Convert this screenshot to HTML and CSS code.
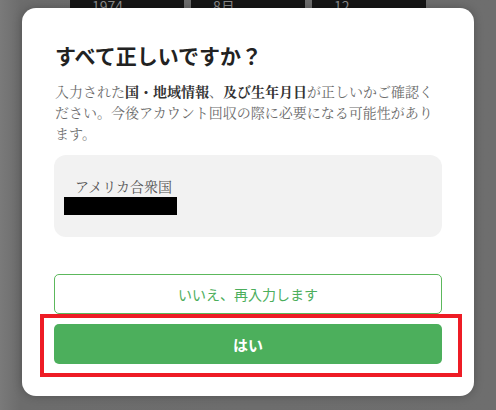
FILE: index.html
```html
<!DOCTYPE html>
<html lang="ja">
<head>
<meta charset="utf-8">
<title>確認</title>
<link rel="stylesheet" href="styles.css">
</head>
<body>
<div class="page">
  <div class="date-row">
    <div class="date-field">1974</div>
    <div class="date-field">8月</div>
    <div class="date-field">12</div>
  </div>
</div>
<div class="modal">
  <h1 class="title">すべて正しいですか？</h1>
  <p class="desc">入力された<b>国・地域情報</b>、<b>及び生年月日</b>が正しいかご確認ください。今後アカウント回収の際に必要になる可能性があります。</p>
  <div class="summary">
    <div class="country">アメリカ合衆国</div>
    <div class="redacted"></div>
  </div>
  <div class="actions">
    <button class="btn btn-outline">いいえ、再入力します</button>
    <div class="highlight">
      <button class="btn btn-primary">はい</button>
    </div>
  </div>
</div>
</body>
</html>
```
FILE: styles.css
```css
html, body {
  margin: 0;
  padding: 0;
}
body {
  width: 496px;
  height: 410px;
  overflow: hidden;
  background: linear-gradient(90deg, #7a7a7a 0px, #6c6c6c 20px, #6e6e6e 100%);
  font-family: "Noto Sans CJK JP", "Noto Sans", sans-serif;
  position: relative;
}
.page {
  padding-left: 70px;
}
.date-row {
  display: flex;
  gap: 7px;
  margin-top: -9px;
}
.date-field {
  width: 114px;
  height: 30px;
  background: #161616;
  color: #8a8a8a;
  font-size: 14px;
  line-height: 30px;
  padding-left: 22px;
  box-sizing: border-box;
}
.modal {
  position: absolute;
  left: 22px;
  top: 8px;
  width: 452px;
  height: 388px;
  box-sizing: border-box;
  background: #fff;
  border-radius: 14px;
  padding: 33px 32px 32px;
  box-shadow: 0 0 10px rgba(0, 0, 0, 0.25);
  display: flex;
  flex-direction: column;
}
.title {
  margin: 0 0 0 1px;
  font-size: 21px;
  line-height: 28px;
  font-weight: 700;
  color: #222;
}
.desc {
  margin: 12px 0 0 1px;
  font-family: "Noto Serif CJK JP", "Liberation Serif", "Noto Sans CJK JP", serif;
  font-size: 14px;
  line-height: 21px;
  color: #6b6b6b;
  width: 386px;
}
.desc b {
  color: #333;
  font-weight: 700;
}
.summary {
  margin-top: 11px;
  background: #f2f2f2;
  border-radius: 12px;
  padding: 21px 10px 22px;
}
.country {
  padding-left: 11px;
  font-family: "Noto Serif CJK JP", "Liberation Serif", "Noto Sans CJK JP", serif;
  font-size: 14px;
  line-height: 20px;
  color: #555;
}
.redacted {
  width: 113px;
  height: 18px;
  margin-top: 1px;
  background: #000;
}
.actions {
  margin-top: auto;
  display: flex;
  flex-direction: column;
  gap: 10px;
}
.btn {
  display: block;
  width: 100%;
  height: 40px;
  border-radius: 5px;
  font-family: "Noto Sans CJK JP", "Noto Sans", sans-serif;
  font-size: 14px;
  cursor: pointer;
}
.btn-outline {
  background: #fff;
  border: 1px solid #5cb85c;
  color: #4cae5c;
}
.btn-primary {
  background: #4caf5c;
  border: none;
  color: #fff;
  font-weight: 700;
  font-size: 15px;
}
.highlight {
  position: relative;
}
.highlight::after {
  content: "";
  position: absolute;
  top: -10px;
  left: -14px;
  right: -20px;
  bottom: -13px;
  border: 4px solid #ee1c25;
  pointer-events: none;
}
```
